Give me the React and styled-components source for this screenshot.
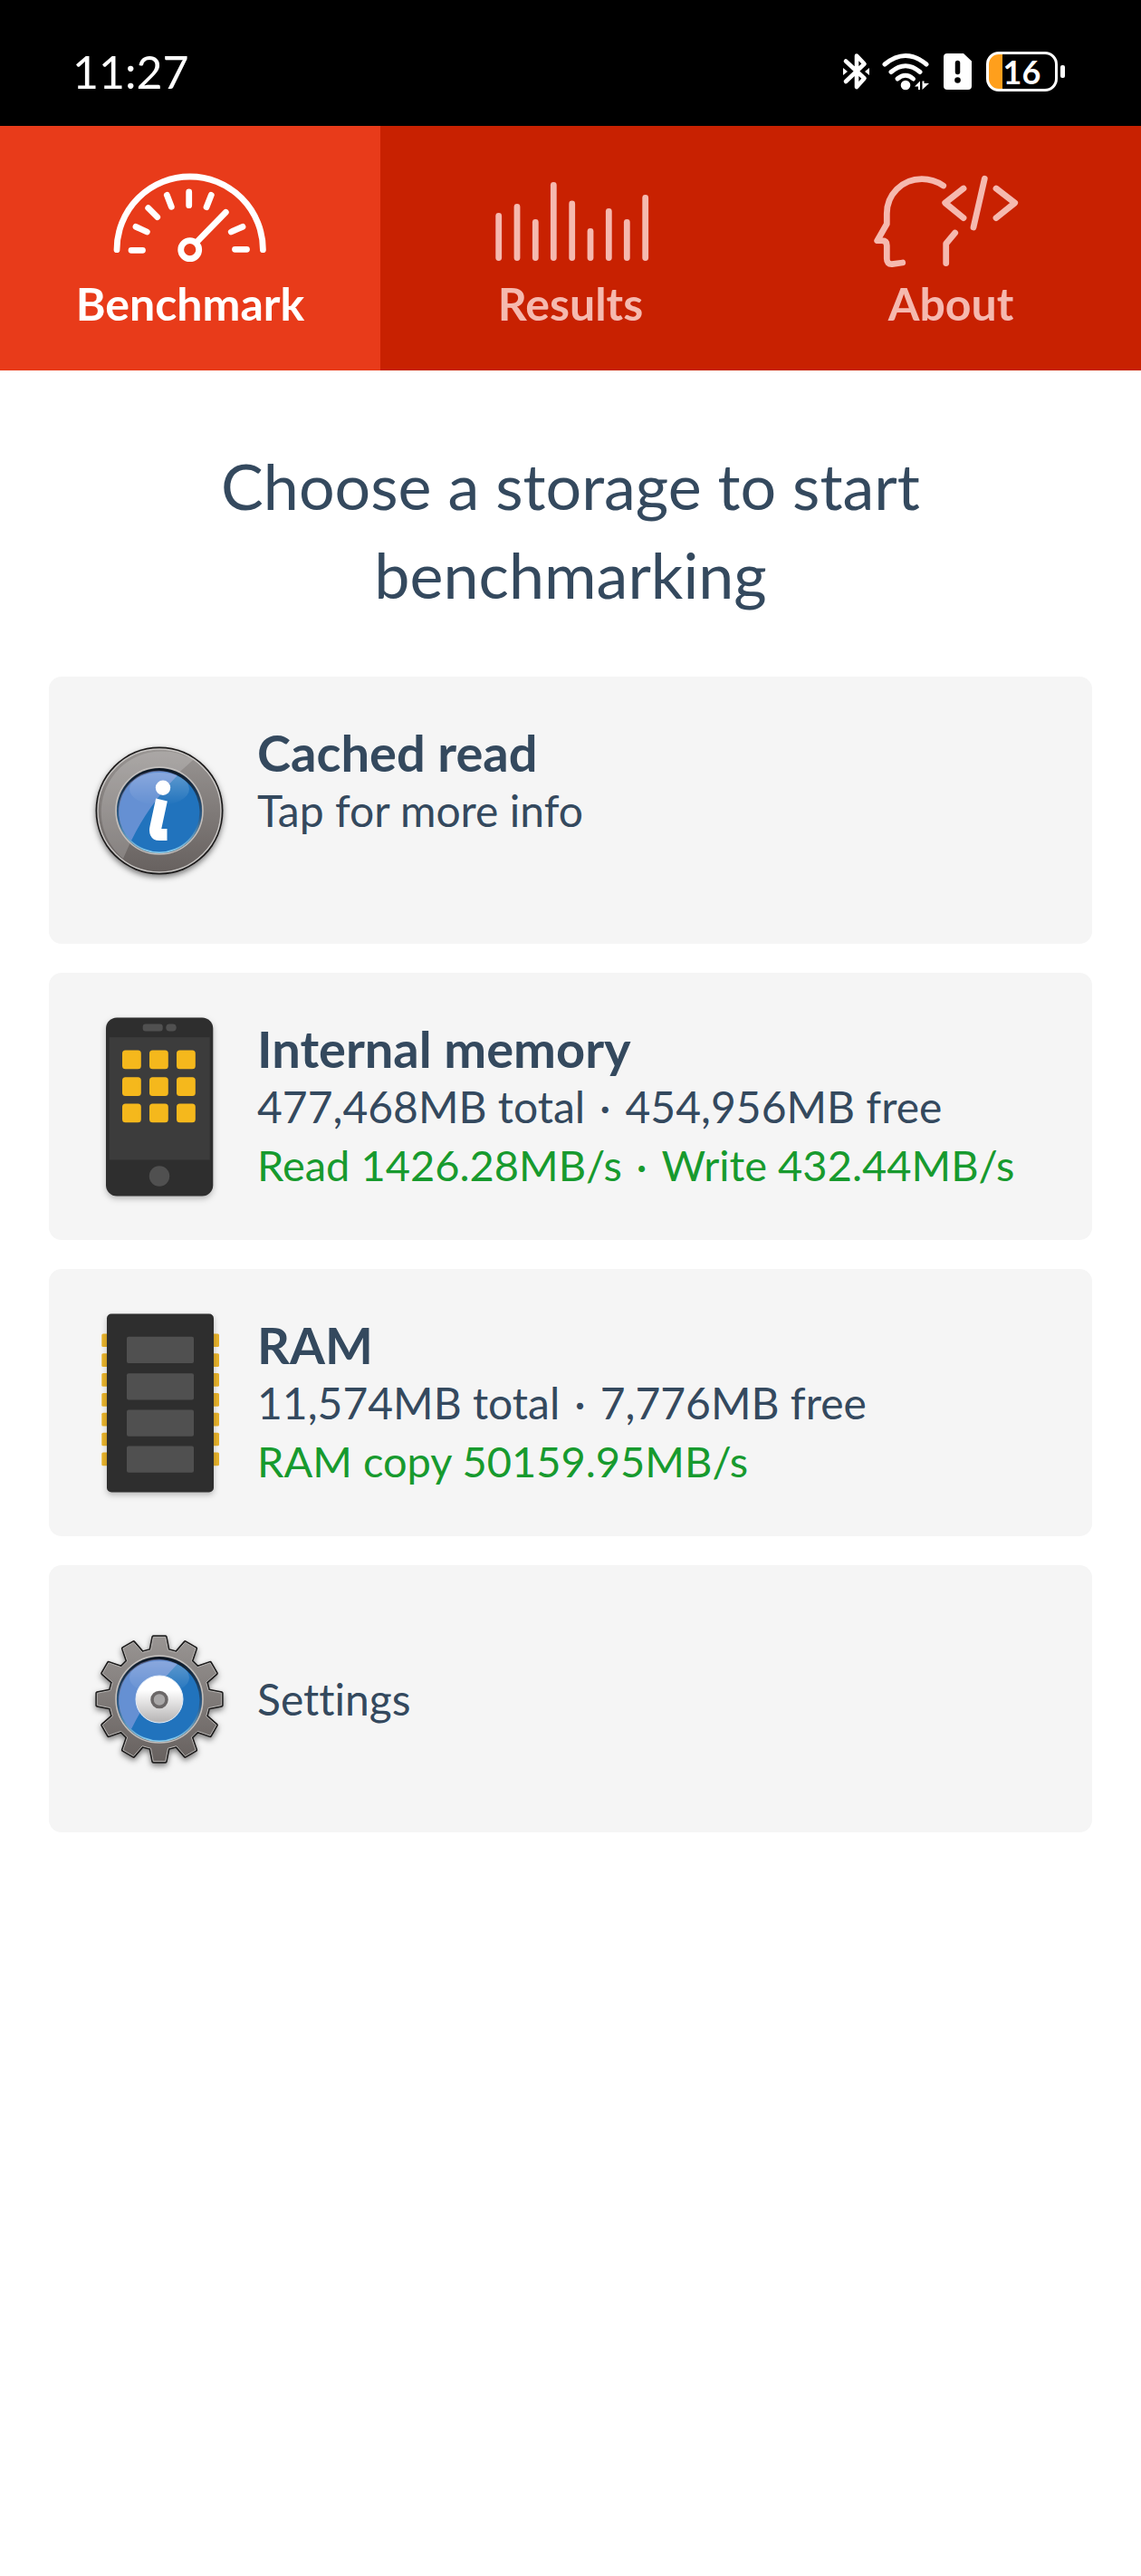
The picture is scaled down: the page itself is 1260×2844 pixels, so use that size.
import React from "react";
import styled, { createGlobalStyle } from "styled-components";

const GlobalStyle = createGlobalStyle`
  * { box-sizing: border-box; }
  body {
    margin: 0;
    background: #fff;
    color: #34495e;
    font-family: Lato, "Noto Sans", sans-serif;
    font-variant-ligatures: none;
  }
  button { font: inherit; color: inherit; border: 0; margin: 0; cursor: pointer; }
`;

const StatusBar = styled.header`
  display: flex;
  align-items: center;
  justify-content: space-between;
  height: 139px;
  padding: 18px 84px 0 80px;
  background: #000;
  color: #fff;
`;

const Clock = styled.time`
  font-size: 50px;
  line-height: 64px;
`;

const StatusIcons = styled.div`
  display: flex;
  align-items: center;
  gap: 16px;
`;

const StatusIcon = styled.svg`
  display: block;
  overflow: visible;
`;

const Battery = styled.div`
  display: flex;
  align-items: center;
  gap: 3px;
`;

const BatteryBody = styled.div`
  width: 79px;
  height: 44px;
  border: 3px solid #fff;
  border-radius: 14px;
  background: linear-gradient(to right, #ff9f1c 15px, #000 15px);
  font-size: 36px;
  font-weight: 700;
  line-height: 38px;
  text-align: center;
`;

const BatteryTip = styled.span`
  width: 5px;
  height: 14px;
  border-radius: 2px;
  background: #fff;
`;

const TabBar = styled.nav`
  display: grid;
  grid-template-columns: repeat(3, 1fr);
  background: #c82101;
`;

const Tab = styled.button`
  display: flex;
  flex-direction: column;
  align-items: center;
  gap: 16px;
  padding: 52px 0 46px;
  background: ${(p) => (p.$active ? "#e83b1a" : "transparent")};
  color: ${(p) => (p.$active ? "#fff" : "#f5b9af")};
`;

const TabIcon = styled.svg`
  display: block;
  width: 180px;
  height: 100px;
  overflow: visible;
  fill: none;
  stroke: currentColor;
  stroke-width: 6.8;
  stroke-linecap: round;
  stroke-linejoin: round;
`;

const TabLabel = styled.span`
  font-size: 50px;
  font-weight: 700;
  line-height: 56px;
`;

const Content = styled.main`
  padding: 78px 54px;
`;

const Heading = styled.h1`
  max-width: 900px;
  margin: 0 auto 64px;
  font-size: 70px;
  font-weight: 400;
  line-height: 98px;
  text-align: center;
`;

const CardList = styled.ul`
  display: flex;
  flex-direction: column;
  gap: 32px;
  margin: 0;
  padding: 0;
  list-style: none;
`;

const Card = styled.button`
  display: flex;
  align-items: center;
  gap: 36px;
  width: 100%;
  min-height: 295px;
  padding: 47px 50px;
  border-radius: 14px;
  background: #f5f5f5;
  text-align: left;
`;

const CardIcon = styled.svg`
  display: block;
  flex: none;
  width: 144px;
  height: 200px;
  overflow: visible;
`;

const CardText = styled.span`
  display: flex;
  flex-direction: column;
  min-height: ${(p) => (p.$single ? "64px" : "192px")};
  font-size: 48px;
  line-height: 64px;
`;

const CardTitle = styled.strong`
  font-size: 56px;
  font-weight: 700;
`;

const CardResult = styled.span`
  color: #179a2e;
  font-size: 47px;
`;

function BluetoothIcon() {
  return (
    <StatusIcon width="27" height="42" viewBox="0 0 27 42" fill="none" stroke="#fff" strokeWidth="4.6" strokeLinecap="round" strokeLinejoin="round" aria-hidden="true">
      <path d="M3 9.500 L23.500 28.500 L15 38 V3.500 L23.500 12.500 L3 32" />
      <path d="M0 17 L5 21 L0 25 Z M29 17 L24 21 L29 25 Z" fill="#fff" stroke="none" />
    </StatusIcon>
  );
}

function WifiIcon() {
  return (
    <StatusIcon width="52" height="42" viewBox="0 0 52 42" fill="none" stroke="#fff" strokeWidth="5" strokeLinecap="round" aria-hidden="true">
      <path d="M3 13 Q26 -6 49 13" />
      <path d="M10 21.500 Q26 8 42 21.500" />
      <path d="M17 29 Q26 21.500 34.500 29" />
      <circle cx="26" cy="36" r="5.300" fill="#fff" stroke="none" />
      <path d="M42 31.500 V41 H40 V37.500 H36 Z M44.500 41 V31.500 H46.500 V34 H52 Z" fill="#fff" stroke="none" />
    </StatusIcon>
  );
}

function SimAlertIcon() {
  return (
    <StatusIcon width="31" height="42" viewBox="0 0 31 42" aria-hidden="true">
      <path d="M4 1 H22 L31 9.500 V37 a4 4 0 0 1 -4 4 H4 a4 4 0 0 1 -4 -4 V5 a4 4 0 0 1 4 -4 Z" fill="#fff" />
      <path d="M15.500 11.500 V21.500" stroke="#000" strokeWidth="5.500" strokeLinecap="round" />
      <circle cx="15.500" cy="30.500" r="3.300" fill="#000" />
    </StatusIcon>
  );
}

function GaugeIcon() {
  return (
    <TabIcon viewBox="0 0 180 100" aria-hidden="true">
      <path d="M9 84.700 A80.700 80.700 0 0 1 170.400 84.700" />
      <path d="M25 85.300 H37.500 M30 59.300 L42.300 65 M43.700 38.700 L53.700 48.700 M64.300 24.300 L69.300 37.300 M88.700 21 V35.700 M113.300 24.300 L108 37.700 M148 59.300 L135.300 65 M139.500 84.300 H152.500" />
      <path d="M129.300 43.300 L97.500 76" />
      <circle cx="89.700" cy="84.700" r="10" />
    </TabIcon>
  );
}

const bars = [
  [10.7, 47.5], [31, 37.5], [51.3, 54.5], [71.3, 13.5], [91.7, 34],
  [112, 64.5], [132.3, 42.5], [152.3, 54.5], [172.7, 27.5],
];

function BarsIcon() {
  return (
    <TabIcon viewBox="0 0 180 100" aria-hidden="true">
      {bars.map(([x, y]) => (
        <path key={x} d={`M${x} ${y} V93.500`} />
      ))}
    </TabIcon>
  );
}

function CoderIcon() {
  return (
    <TabIcon viewBox="0 0 180 100" aria-hidden="true">
      <path d="M81.700 14 C75 9.500 67 6.700 58 6.700 C36 6.700 19.300 24 19.300 45 V56.300 L8.700 74.700 H14 Q19.300 74.700 19.300 80 V94.500 Q19.300 100.800 25 100.600 L36.700 99" />
      <path d="M94.700 66 L84.700 78 V99.500" />
      <path d="M104 17 L83.700 33 L104 49.700 M127.300 6.300 L115 60 M140 17 L160.700 33 L140 49.700" />
    </TabIcon>
  );
}

function MetalDefs({ id }) {
  return (
    <defs>
      <linearGradient id={`${id}-metal`} x1="0" y1="0" x2="0" y2="1">
        <stop offset="0" stopColor="#999593" />
        <stop offset="1" stopColor="#67615f" />
      </linearGradient>
      <linearGradient id={`${id}-rim`} x1="0" y1="0" x2="0" y2="1">
        <stop offset="0" stopColor="#0b1420" />
        <stop offset="0.6" stopColor="#2b5f8f" />
        <stop offset="1" stopColor="#8cd2f4" />
      </linearGradient>
      <linearGradient id={`${id}-hub`} x1="0" y1="0" x2="0" y2="1">
        <stop offset="0.3" stopColor="#fff" />
        <stop offset="1" stopColor="#b5b3b3" />
      </linearGradient>
      <linearGradient id={`${id}-shine`} x1="0" y1="0" x2="0" y2="1">
        <stop offset="0" stopColor="#fff" stopOpacity="0.28" />
        <stop offset="1" stopColor="#fff" stopOpacity="0" />
      </linearGradient>
      <filter id={`${id}-shadow`} x="-20%" y="-20%" width="140%" height="140%">
        <feDropShadow dx="0" dy="3" stdDeviation="3" floodColor="#000" floodOpacity="0.5" />
      </filter>
    </defs>
  );
}

function BlueLens({ id }) {
  return (
    <>
      <circle cx="72" cy="100" r="48" fill="none" stroke="#c3c0be" strokeWidth="1.500" />
      <circle cx="72" cy="100" r="47" fill={`url(#${id}-rim)`} />
      <circle cx="72" cy="101" r="44.500" fill="#2173bd" />
      <ellipse cx="72" cy="76" rx="33" ry="18" fill={`url(#${id}-shine)`} />
      <path d="M92 61 Q60 94 41 133 A44.500 44.500 0 0 1 92 61 Z" fill="#c4b9f0" opacity="0.42" />
    </>
  );
}

function InfoIcon() {
  return (
    <CardIcon viewBox="0 0 144 200" aria-hidden="true">
      <MetalDefs id="info" />
      <circle cx="72" cy="100" r="70.500" fill="#1d1a1a" filter="url(#info-shadow)" />
      <circle cx="72" cy="100" r="68" fill="url(#info-metal)" stroke="#c9c6c4" strokeWidth="1.500" />
      <path d="M109.300 44 Q60 85 32 153 A67 67 0 0 1 109.300 44 Z" fill="#fff" opacity="0.18" />
      <BlueLens id="info" />
      <circle cx="76" cy="74.800" r="8.200" fill="#fff" />
      <path d="M74.500 88 L68 118 Q66 126.500 72 126.500 H80.500" fill="none" stroke="#fff" strokeWidth="13" />
    </CardIcon>
  );
}

const gearPath = (() => {
  const at = (r, deg) => {
    const a = (deg * Math.PI) / 180;
    return `${(72 + r * Math.sin(a)).toFixed(2)} ${(100 - r * Math.cos(a)).toFixed(2)}`;
  };
  const points = [];
  for (let i = 0; i < 12; i += 1) {
    const c = i * 30;
    points.push(at(55, c - 10), at(69, c - 5.6), at(69, c + 5.6), at(55, c + 10));
  }
  return `M${points.join(" L")} Z`;
})();

function GearIcon() {
  return (
    <CardIcon viewBox="0 0 144 200" aria-hidden="true">
      <MetalDefs id="gear" />
      <path d={gearPath} fill="#1d1a1a" stroke="#1d1a1a" strokeWidth="4" strokeLinejoin="round" filter="url(#gear-shadow)" />
      <path d={gearPath} fill="url(#gear-metal)" stroke="#b9b6b4" strokeWidth="1" />
      <BlueLens id="gear" />
      <circle cx="72" cy="100" r="26" fill="url(#gear-hub)" stroke="#e4eefa" strokeWidth="1" />
      <circle cx="72" cy="100.500" r="8" fill="#a9a7a7" stroke="#6b6767" strokeWidth="3.500" />
    </CardIcon>
  );
}

function PhoneIcon() {
  return (
    <CardIcon viewBox="0 0 144 200" aria-hidden="true">
      <filter id="phone-shadow" x="-20%" y="-20%" width="140%" height="140%">
        <feDropShadow dx="0" dy="3" stdDeviation="3" floodColor="#000" floodOpacity="0.25" />
      </filter>
      <rect x="13" y="1.500" width="118.300" height="197" rx="12" fill="#2e2e2e" filter="url(#phone-shadow)" />
      <rect x="16.700" y="23.200" width="111" height="135.300" fill="#3c3c3c" />
      <rect x="53.700" y="8.500" width="22" height="8" rx="3" fill="#505050" />
      <rect x="79.300" y="8.500" width="11.400" height="8" rx="4" fill="#505050" />
      {[37.5, 67.2, 96.4].map((y) =>
        [31, 61, 91].map((x) => (
          <rect key={`${x}-${y}`} x={x} y={y} width="20.800" height="20.800" rx="3.500" fill="#f5b81c" />
        ))
      )}
      <circle cx="72" cy="176.500" r="11.200" fill="#505050" />
    </CardIcon>
  );
}

function RamIcon() {
  return (
    <CardIcon viewBox="0 0 144 200" aria-hidden="true">
      <filter id="ram-shadow" x="-20%" y="-20%" width="140%" height="140%">
        <feDropShadow dx="0" dy="3" stdDeviation="3" floodColor="#000" floodOpacity="0.25" />
      </filter>
      {[0, 1, 2, 3, 4, 5, 6].map((i) => (
        <rect key={i} x="8.300" y={23.4 + i * 21.85} width="129.700" height="14.700" rx="1.500" fill="#e8b32a" />
      ))}
      <rect x="14" y="1.500" width="118" height="197" rx="5" fill="#2e2e2e" filter="url(#ram-shadow)" />
      {[26.8, 67.2, 107.4, 147.4].map((y) => (
        <rect key={y} x="36" y={y} width="74" height="29.300" rx="2" fill="#505050" />
      ))}
    </CardIcon>
  );
}

const tabs = [
  { label: "Benchmark", Icon: GaugeIcon, active: true },
  { label: "Results", Icon: BarsIcon },
  { label: "About", Icon: CoderIcon },
];

const storages = [
  { title: "Cached read", detail: "Tap for more info", Icon: InfoIcon },
  {
    title: "Internal memory",
    detail: "477,468MB total\u2004·\u2004454,956MB free",
    result: "Read 1426.28MB/s\u2004·\u2004Write 432.44MB/s",
    Icon: PhoneIcon,
  },
  {
    title: "RAM",
    detail: "11,574MB total\u2004·\u20047,776MB free",
    result: "RAM copy 50159.95MB/s",
    Icon: RamIcon,
  },
  { detail: "Settings", Icon: GearIcon },
];

export default function App() {
  return (
    <>
      <GlobalStyle />
      <StatusBar>
        <Clock>11:27</Clock>
        <StatusIcons>
          <BluetoothIcon />
          <WifiIcon />
          <SimAlertIcon />
          <Battery>
            <BatteryBody>16</BatteryBody>
            <BatteryTip />
          </Battery>
        </StatusIcons>
      </StatusBar>
      <TabBar>
        {tabs.map(({ label, Icon, active }) => (
          <Tab key={label} type="button" $active={active} aria-current={active ? "page" : undefined}>
            <Icon />
            <TabLabel>{label}</TabLabel>
          </Tab>
        ))}
      </TabBar>
      <Content>
        <Heading>Choose a storage to start benchmarking</Heading>
        <CardList>
          {storages.map(({ title, detail, result, Icon }) => (
            <li key={title || detail}>
              <Card type="button">
                <Icon />
                <CardText $single={!title}>
                  {title && <CardTitle>{title}</CardTitle>}
                  <span>{detail}</span>
                  {result && <CardResult>{result}</CardResult>}
                </CardText>
              </Card>
            </li>
          ))}
        </CardList>
      </Content>
    </>
  );
}
